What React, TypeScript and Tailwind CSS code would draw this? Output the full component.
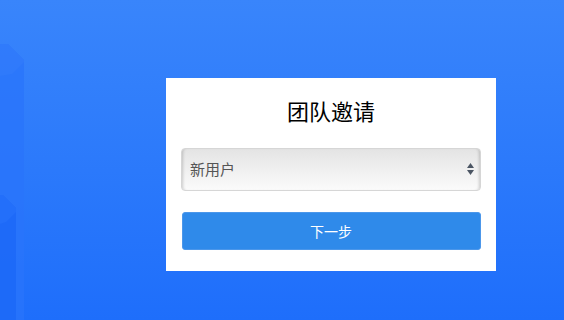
import React from "react";

export default function App() {
  return (
    <div className="relative w-[564px] h-[320px] overflow-hidden bg-gradient-to-b from-[#3985fb] to-[#1e6efb]" style={{ fontFamily: '"Noto Sans CJK SC", "Noto Sans", sans-serif' }}>
      <svg className="absolute left-0 top-0" width="40" height="320" viewBox="0 0 40 320">
        <path d="M0 44 L8 44 L24 60 L24 320 L0 320 Z" fill="#2a74fb" opacity="0.75" />
        <path d="M0 44 L8 44 L24 60 L24 62 L12 74 L0 76 Z" fill="#347efb" opacity="0.5" />
        <path d="M0 195 L3 195 L16 208 L16 320 L0 320 Z" fill="#1c68f8" opacity="0.8" />
        <path d="M0 195 L3 195 L16 208 L16 212 L6 222 L0 224 Z" fill="#2874fb" opacity="0.5" />
      </svg>
      <div className="flex pt-[78px] pl-[166px]">
        <div className="w-[330px] h-[193px] bg-white flex flex-col items-center pt-[17px] px-[15px]">
          <h1 className="text-[22px] leading-[30px] text-black font-normal">团队邀请</h1>
          <div className="mt-[23px] w-[300px] h-[43px] rounded-[4px] border border-[#d6d6d6] bg-gradient-to-b from-[#e4e4e4] to-[#fbfbfb] shadow-[inset_3px_0_3px_-2px_rgba(0,0,0,0.18),inset_-3px_0_3px_-2px_rgba(0,0,0,0.18)] flex items-center justify-between pl-[8px] pr-[5px]">
            <span className="text-[15px] text-[#555] leading-none mb-[3px]">新用户</span>
            <svg width="9" height="14" viewBox="0 0 9 14" className="mb-[1px]">
              <path d="M4.5 1 L8 6 L1 6 Z" fill="#4b5563" />
              <path d="M4.5 13 L8 8 L1 8 Z" fill="#4b5563" />
            </svg>
          </div>
          <button className="mt-[21px] w-[299px] h-[38px] rounded-[3px] bg-[#2f8aea] border border-[#4c97ea] text-white text-[14px] flex items-center justify-center">
            下一步
          </button>
        </div>
      </div>
    </div>
  );
}
